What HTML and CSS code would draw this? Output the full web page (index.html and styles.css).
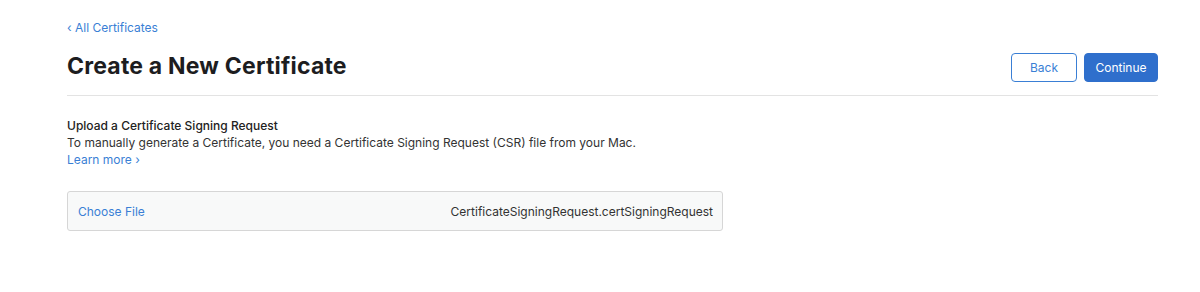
FILE: index.html
```html
<!DOCTYPE html>
<html lang="en">
<head>
  <meta charset="UTF-8">
  <title>Create a New Certificate</title>
  <link rel="stylesheet" href="styles.css">
</head>
<body>

<div class="page">
  <a class="back-link" href="#">&lsaquo; All Certificates</a>

  <!-- Title row -->
  <div class="title-row">
    <h1>Create a New Certificate</h1>
    <div class="actions">
      <button class="btn btn-outline">Back</button>
      <button class="btn btn-primary">Continue</button>
    </div>
  </div>

  <!-- Upload section -->
  <div class="section">
    <h2>Upload a Certificate Signing Request</h2>
    <p>To manually generate a Certificate, you need a Certificate Signing Request (CSR) file from your Mac.</p>
    <a class="more" href="#">Learn more &rsaquo;</a>
  </div>

  <div class="file-box">
    <a class="choose" href="#">Choose File</a>
    <span class="file-name">CertificateSigningRequest.certSigningRequest</span>
  </div>
</div>

</body>
</html>
```

FILE: styles.css
```css
body {
  margin: 0;
  font-family: Inter, "Noto Sans", sans-serif;
  background: #fff;
  color: #1d1d1f;
}
a { color: #3a7fd5; text-decoration: none; }
.page {
  padding: 20px 42px 0 67px;
}
.back-link {
  display: block;
  font-size: 12px;
  line-height: 16px;
}
.title-row {
  display: flex;
  justify-content: space-between;
  align-items: center;
  padding: 17px 0 13px;
  border-bottom: 1px solid #e3e3e3;
}
.title-row h1 {
  margin: 0 0 4px;
  font-size: 23px;
  font-weight: 700;
  letter-spacing: 0.2px;
  line-height: 22px;
}
.actions { display: flex; gap: 7px; }
.btn {
  height: 29px;
  font-family: inherit;
  font-size: 12px;
  border-radius: 4px;
  cursor: pointer;
}
.btn-outline {
  width: 66px;
  background: #fff;
  color: #3a7fd5;
  border: 1px solid #3a7fd5;
}
.btn-primary {
  width: 74px;
  background: #2f6fcc;
  color: #fff;
  border: 1px solid #2f6fcc;
}
.section {
  padding-top: 21px;
  font-size: 12px;
  line-height: 17px;
}
.section h2 {
  margin: 0;
  font-size: 12px;
  font-weight: 500;
  line-height: 17px;
  color: #222;
}
.section p { margin: 0; color: #333; }
.more { display: block; }
.file-box {
  width: 656px;
  height: 40px;
  margin-top: 23px;
  box-sizing: border-box;
  display: flex;
  justify-content: space-between;
  align-items: center;
  padding: 0 9px 0 10px;
  background: #f8f9f9;
  border: 1px solid #d6d6d6;
  border-radius: 3px;
  font-size: 12px;
}
.file-box .file-name { color: #333; }
```
